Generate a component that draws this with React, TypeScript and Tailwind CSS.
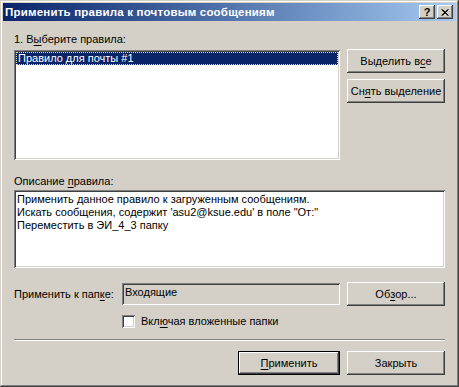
const raised =
  'shadow-[inset_-1px_-1px_#404040,inset_1px_1px_#ffffff,inset_-2px_-2px_#808080,inset_2px_2px_#d4d0c8]';
const sunken =
  'shadow-[inset_1px_1px_#808080,inset_-1px_-1px_#ffffff,inset_2px_2px_#404040,inset_-2px_-2px_#d4d0c8]';

const Btn = ({ children, w = 'w-[98px]', isDefault = false }: { children: React.ReactNode; w?: string; isDefault?: boolean }) => (
  <div
    className={`${w} h-[24px] flex items-center justify-center bg-[#d4d0c8] ${
      isDefault
        ? 'border border-black shadow-[inset_-1px_-1px_#404040,inset_1px_1px_#ffffff,inset_-2px_-2px_#808080,inset_2px_2px_#d4d0c8]'
        : raised
    }`}
  >
    {children}
  </div>
);

const U = ({ children }: { children: React.ReactNode }) => <span className="underline underline-offset-2">{children}</span>;

export default function App() {
  return (
    <div
      className="w-[459px] h-[387px] bg-[#d4d0c8] p-[3px] flex flex-col text-[11px] leading-[13px] text-black shadow-[inset_-1px_-1px_#404040,inset_1px_1px_#d4d0c8,inset_-2px_-2px_#808080,inset_2px_2px_#ffffff]"
      style={{ fontFamily: '"Liberation Sans", Arial, sans-serif' }}
    >
      {/* title bar */}
      <div className="h-[18px] flex items-center justify-between pl-[2px] pr-[3px] bg-gradient-to-r from-[#0a246a] to-[#a6caf0]">
        <span className="text-white font-bold text-[11.5px] tracking-[0.2px]">Применить правила к почтовым сообщениям</span>
        <div className="flex gap-[2px]">
          <div className={`w-[16px] h-[14px] bg-[#d4d0c8] ${raised} flex items-center justify-center font-bold text-[11px] leading-none`}>?</div>
          <div className={`w-[16px] h-[14px] bg-[#d4d0c8] ${raised} flex items-center justify-center`}>
            <svg width="8" height="7" viewBox="0 0 8 7">
              <path d="M0.5 0.5 L7 6.5 M1.5 0.5 L7.5 6.5 M7 0.5 L0.5 6.5 M7.5 0.5 L1.5 6.5" stroke="#000" strokeWidth="1" />
            </svg>
          </div>
        </div>
      </div>

      <div className="flex flex-col pl-[11px] pr-[11px]">
        <div className="mt-[12px] h-[13px]">
          1. В<U>ы</U>берите правила:
        </div>
        <div className="mt-[4px] flex gap-[7px]">
          <div className={`w-[326px] h-[110px] bg-white p-[2px] ${sunken}`}>
            <div className="h-[13px] bg-[#0a246a] text-white pl-[2px] outline outline-1 outline-dotted outline-[#f0e68c] -outline-offset-1">
              Правило для почты #1
            </div>
          </div>
          <div className="flex flex-col gap-[6px] -mt-[1px]">
            <Btn>Выделить в<U>с</U>е</Btn>
            <Btn>Сн<U>я</U>ть выделение</Btn>
          </div>
        </div>

        <div className="mt-[15px] h-[13px]">
          Описание <U>п</U>равила:
        </div>
        <div className={`mt-[2px] w-[431px] h-[78px] bg-white pt-[3px] pl-[3px] ${sunken}`}>
          <div>Применить данное правило к загруженным сообщениям.</div>
          <div>Искать сообщения, содержит 'asu2@ksue.edu' в поле "От:"</div>
          <div>Переместить в ЭИ_4_3 папку</div>
        </div>

        <div className="mt-[14px] flex items-center">
          <div className="w-[108px]">
            Применить к пап<U>к</U>е:
          </div>
          <div className={`w-[218px] h-[22px] pl-[3px] pt-[3px] ${sunken}`}>Входящие</div>
          <div className="ml-[7px]">
            <Btn>Об<U>з</U>ор...</Btn>
          </div>
        </div>

        <div className="mt-[9px] ml-[108px] flex items-center gap-[6px]">
          <div className={`w-[13px] h-[13px] bg-white ${sunken}`} />
          <span>
            Вкл<U>ю</U>чая вложенные папки
          </span>
        </div>

        <div className="mt-[11px] h-[2px] border-t border-t-[#808080] border-b border-b-white" />

        <div className="mt-[10px] flex justify-end gap-[7px]">
          <Btn w="w-[102px]" isDefault>
            <U>П</U>рименить
          </Btn>
          <Btn>Закрыть</Btn>
        </div>
      </div>
    </div>
  );
}
